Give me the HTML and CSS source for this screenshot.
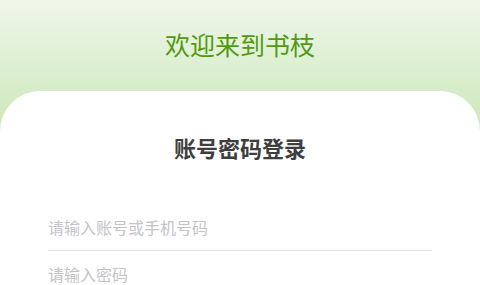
FILE: index.html
```html
<!DOCTYPE html>
<html lang="zh-CN">
<head>
  <meta charset="UTF-8">
  <meta name="viewport" content="width=device-width, initial-scale=1.0">
  <title>登录</title>
  <link rel="stylesheet" href="styles.css">
</head>
<body>

  <div class="header">
    <h1 class="welcome">欢迎来到书枝</h1>
  </div>

  <div class="card">
    <h2 class="card-title">账号密码登录</h2>
    <form class="login-form">
      <div class="field">
        <input type="text" placeholder="请输入账号或手机号码">
      </div>
      <div class="field">
        <input type="password" placeholder="请输入密码">
      </div>
    </form>
  </div>

</body>
</html>
```

FILE: styles.css
```css
html, body {
  height: 100%;
}

body {
  margin: 0;
  display: flex;
  flex-direction: column;
  background: linear-gradient(to bottom, #eff7eb 0%, #c9e6b5 100%) no-repeat;
  background-size: 100% 140px;
  background-color: #c9e6b5;
  font-family: "Noto Sans CJK SC", "Noto Sans", sans-serif;
  overflow: hidden;
}

.header {
  flex-shrink: 0;
  height: 91px;
  display: flex;
  justify-content: center;
  align-items: center;
  padding-bottom: 2px;
  box-sizing: border-box;
}

.welcome {
  margin: 0;
  font-size: 25px;
  line-height: 1;
  font-weight: normal;
  color: #519a12;
}

.card {
  flex: 1 0 auto;
  background-color: #fff;
  border-radius: 40px 40px 0 0;
  padding: 45px 48px 0;
}

.card-title {
  margin: 0;
  text-align: center;
  font-size: 22px;
  line-height: 22px;
  font-weight: bold;
  color: #3e3e3e;
}

.login-form {
  margin-top: 46px;
}

.field {
  height: 46px;
  display: flex;
  align-items: center;
  border-bottom: 1px solid #e6e6e6;
}

.field:last-child {
  border-bottom: none;
}

.field input {
  width: 100%;
  border: none;
  outline: none;
  padding: 0;
  background: transparent;
  font-family: inherit;
  font-size: 16px;
  line-height: 22px;
  color: #333;
}

.field input::placeholder {
  color: #c3c3c9;
}
```
